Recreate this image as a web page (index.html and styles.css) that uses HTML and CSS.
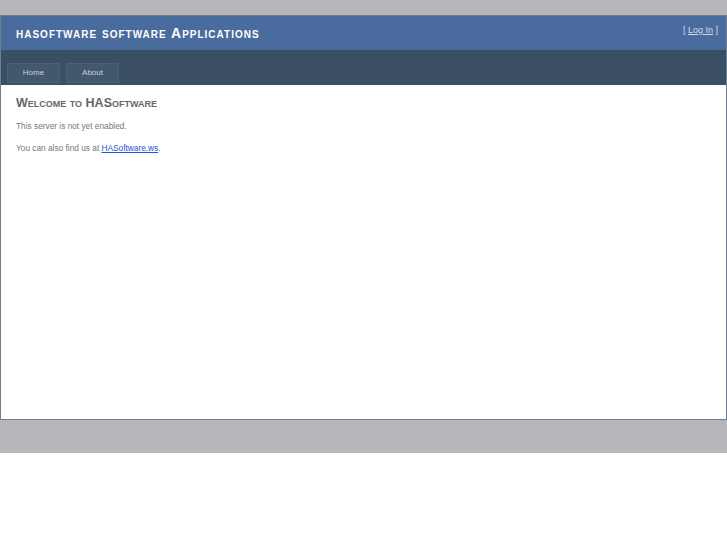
FILE: index.html
```html
<!DOCTYPE html>
<html>
<head>
<meta charset="utf-8">
<title>HASoftware</title>
<link rel="stylesheet" href="styles.css">
</head>
<body>
<div class="page">
  <div class="header">
    <h1 class="site-title">hasoftware software Applications</h1>
    <div class="login">[ <a href="#">Log In</a> ]</div>
  </div>
  <div class="nav">
    <a class="tab" href="#">Home</a>
    <a class="tab" href="#">About</a>
  </div>
  <div class="main">
    <h2 class="welcome">Welcome to HASoftware</h2>
    <p class="text">This server is not yet enabled.</p>
    <p class="text">You can also find us at <a class="link" href="#">HASoftware.ws</a>.</p>
  </div>
</div>
</body>
</html>
```

FILE: styles.css
```css
html {
  background: #ffffff;
}
body {
  margin: 0;
  padding: 15px 0 33px;
  background: #b6b6bb;
  font-family: "Liberation Sans", Arial, sans-serif;
}
.page {
  border: 1px solid #6f7f8f;
  background: #ffffff;
}
.header {
  height: 34px;
  background: #4a6b9e;
  display: flex;
  justify-content: space-between;
  align-items: flex-start;
  padding: 0 8px 0 15px;
}
.site-title {
  margin: 0;
  padding-top: 9px;
  font-size: 14px;
  font-weight: bold;
  font-variant: small-caps;
  letter-spacing: 1px;
  color: #ffffff;
}
.login {
  padding-top: 9px;
  font-size: 9px;
  color: #d5dce8;
}
.login a {
  color: #d5dce8;
}
.nav {
  height: 35px;
  background: #3a4f63;
  display: flex;
  gap: 6px;
  padding: 13px 0 0 6px;
  box-sizing: border-box;
}
.tab {
  width: 51px;
  height: 18px;
  line-height: 18px;
  text-align: center;
  font-size: 8px;
  color: #c9d1da;
  background: #42586d;
  border: 1px solid #4b6177;
  text-decoration: none;
}
.main {
  height: 334px;
  padding: 11px 15px 10px;
  box-sizing: border-box;
}
.welcome {
  margin: 0 0 11px;
  font-size: 12.5px;
  font-weight: bold;
  font-variant: small-caps;
  color: #666666;
}
.text {
  margin: 0 0 12px;
  font-size: 8.3px;
  color: #777777;
}
.link {
  color: #1a55e6;
}
```
